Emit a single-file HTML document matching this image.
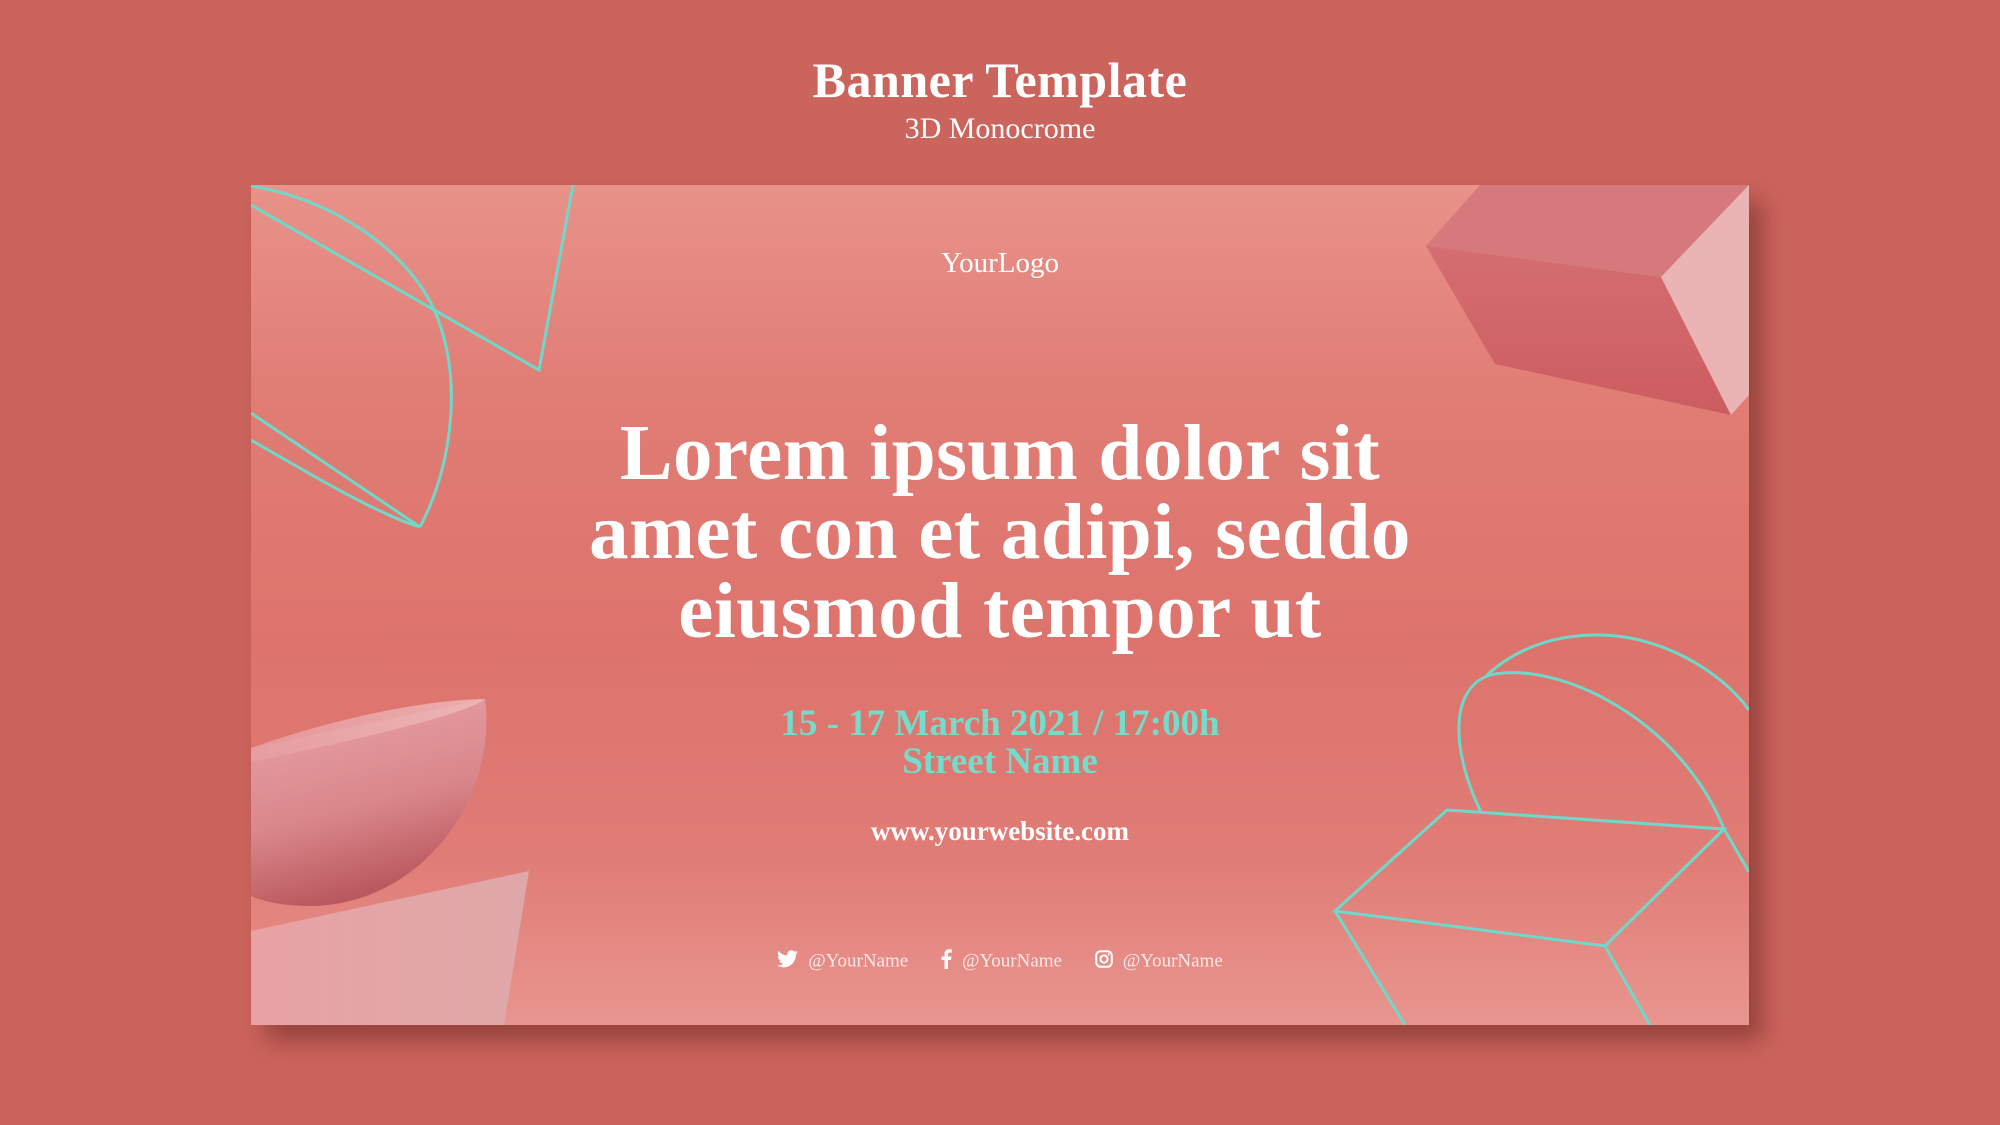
<!DOCTYPE html>
<html><head><meta charset="utf-8"><style>
html,body{margin:0;padding:0;width:2000px;height:1125px;overflow:hidden;background:#cb645c;font-family:"Liberation Serif",serif;}
.t{position:absolute;left:0;width:2000px;text-align:center;color:#fff;}
#banner{position:absolute;left:251px;top:185px;width:1498px;height:840px;background:linear-gradient(#e8928a 0%,#e07d75 25%,#dd736c 55%,#e07c76 80%,#e9958f 100%);box-shadow:14px 16px 22px rgba(110,40,36,0.55);overflow:hidden;}
</style></head><body>
<div class="t" style="top:51px;font-size:50px;font-weight:bold;letter-spacing:0.5px;">Banner Template</div>
<div class="t" style="top:112px;font-size:30px;">3D Monocrome</div>
<div id="banner"></div>
<svg width="2000" height="1125" style="position:absolute;left:0;top:0">
<defs>
<clipPath id="c"><rect x="251" y="185" width="1498" height="840"/></clipPath>
<linearGradient id="bowl" x1="0" y1="0" x2="0.3" y2="1"><stop offset="0" stop-color="#eaa5a8"/><stop offset="0.6" stop-color="#d9878b"/><stop offset="1" stop-color="#b9585e"/></linearGradient>
<linearGradient id="rim" x1="0" y1="0" x2="1" y2="0"><stop offset="0" stop-color="#e69ea1"/><stop offset="1" stop-color="#f0bcbd"/></linearGradient>
<linearGradient id="wedge" x1="0" y1="0" x2="1" y2="0"><stop offset="0" stop-color="#e8a2a3"/><stop offset="1" stop-color="#dfa8a8"/></linearGradient>
<linearGradient id="front" x1="0" y1="0" x2="0" y2="1"><stop offset="0" stop-color="#d46e70"/><stop offset="1" stop-color="#cc5c60"/></linearGradient>
</defs>
<g clip-path="url(#c)">
<polygon points="1426,246 1480,185 1749,185 1661,277" fill="#d6797c"/>
<polygon points="1426,246 1661,277 1731,415 1495,364" fill="url(#front)"/>
<polygon points="1661,277 1749,185 1749,395 1731,415" fill="#ebb4b4"/>
<polygon points="251,931 529,871 504,1025 251,1025" fill="url(#wedge)"/>
<path d="M251,748 L485,699 C498,800 420,904 312,906 C285,906 265,902 251,896 Z" fill="url(#bowl)"/>
<path d="M251,748 C330,720 420,700 485,699 C470,712 380,735 251,762 Z" fill="url(#rim)" opacity="0.8"/>
<g fill="none" stroke="#6fd8c9" stroke-width="3">
<path d="M251,186 C340,200 420,260 440,325 C462,390 450,470 420,527"/>
<path d="M251,205 L539,370 L573,185"/>
<path d="M251,413 L420,527"/>
<path d="M251,440 C320,480 380,515 420,527"/>
<path d="M1447,810 L1724,829 L1605,946 L1335,911 Z"/>
<path d="M1335,911 L1405,1025 M1605,946 L1650,1025"/>
<path d="M1481,812 C1455,760 1445,690 1490,675 C1560,660 1680,720 1724,829 L1749,872"/>
<path d="M1487,675 C1520,645 1560,635 1597,635 C1660,635 1720,670 1749,710"/>
</g>
</g>
</svg>
<div class="t" style="top:247px;font-size:29px;">YourLogo</div>
<div class="t" style="top:414px;font-size:79px;font-weight:bold;line-height:79px;letter-spacing:0.5px;">Lorem ipsum dolor sit<br>amet con et adipi, seddo<br>eiusmod tempor ut</div>
<div class="t" style="top:705px;font-size:37px;font-weight:bold;color:#73dccb;line-height:38px;">15 - 17 March 2021 / 17:00h<br>Street Name</div>
<div class="t" style="top:816px;font-size:27px;font-weight:bold;">www.yourwebsite.com</div>
<div class="t" style="top:949px;font-size:19px;color:#fbe9e7;">
<span style="display:inline-block;vertical-align:middle;margin-right:10px"><svg width="21" height="18" viewBox="0 0 24 20"><path fill="#fff" d="M24 2.4c-.9.4-1.8.6-2.8.8 1-.6 1.8-1.6 2.2-2.7-1 .6-2 1-3.1 1.2C19.3.7 18 0 16.6 0c-2.7 0-4.9 2.2-4.9 4.9 0 .4 0 .8.1 1.1C7.7 5.8 4.1 3.9 1.7.9c-.4.7-.7 1.6-.7 2.5 0 1.7.9 3.2 2.2 4.1-.8 0-1.6-.2-2.2-.6v.1c0 2.4 1.7 4.4 3.9 4.8-.4.1-.8.2-1.3.2-.3 0-.6 0-.9-.1.6 2 2.4 3.4 4.6 3.4-1.7 1.3-3.8 2.1-6.1 2.1-.4 0-.8 0-1.2-.1 2.2 1.4 4.8 2.2 7.5 2.2 9.1 0 14-7.5 14-14v-.6c1-.7 1.8-1.6 2.5-2.5z"/></svg></span>@YourName
<span style="display:inline-block;vertical-align:middle;margin:0 10px 0 28px"><svg width="11" height="20" viewBox="0 0 11 20"><path fill="#fff" d="M7 20V11h3l.5-3.5H7V5.3c0-1 .3-1.7 1.8-1.7h1.9V.4C10.3.3 9.2.2 8 .2 5.3.2 3.5 1.8 3.5 4.8v2.7H.5V11h3v9z"/></svg></span>@YourName
<span style="display:inline-block;vertical-align:middle;margin:0 10px 0 28px"><svg width="18" height="18" viewBox="0 0 18 18"><rect x="1.2" y="1.2" width="15.6" height="15.6" rx="4.5" fill="none" stroke="#fff" stroke-width="2"/><circle cx="9" cy="9" r="3.6" fill="none" stroke="#fff" stroke-width="2"/><circle cx="13.6" cy="4.4" r="1.1" fill="#fff"/></svg></span>@YourName
</div>
</body></html>
